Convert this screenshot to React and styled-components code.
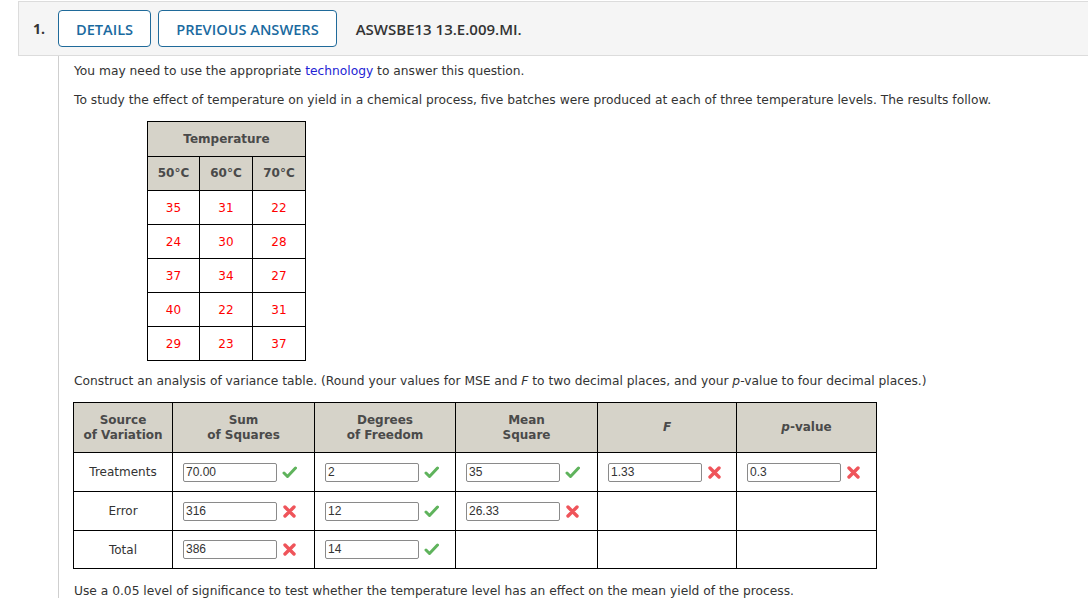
import React from "react";
import styled, { createGlobalStyle } from "styled-components";

const Global = createGlobalStyle`
  html, body { margin: 0; padding: 0; background: #fff; }
  body { font-family: "DejaVu Sans", Verdana, sans-serif; color: #333; }
`;

const Page = styled.div`
  padding: 1px 0 0 18px;
  width: 1100px;
`;

const Header = styled.div`
  display: flex;
  align-items: center;
  height: 53px;
  background: #f5f5f5;
  border: 1px solid #dcdcdc;
  border-right: none;
  padding-left: 14px;
  font-family: "Open Sans", sans-serif;
`;

const Num = styled.span`
  font-weight: 700;
  font-size: 14px;
  color: #333;
  width: 25px;
`;

const TabButton = styled.button`
  height: 37px;
  padding: 0 17px;
  margin-right: 7px;
  background: #fff;
  border: 1px solid #1f6a9a;
  border-radius: 4px;
  color: #1a6aa0;
  font-family: "Open Sans", sans-serif;
  font-size: 14.6px;
  font-weight: 600;
`;

const Code = styled.span`
  margin-left: 12px;
  font-weight: 600;
  font-size: 15px;
  color: #333;
`;

const Body = styled.div`
  margin-left: 40px;
  border-left: 1px solid #cfcfcf;
  padding: 7px 0 0 15px;
  font-size: 12.25px;
  line-height: 16px;
`;

const P = styled.p`
  margin: 0 0 13px 0;
  white-space: nowrap;
`;

const Link = styled.span`
  color: #2323d4;
`;

const Table = styled.table`
  border-collapse: collapse;
  margin: ${p => p.$margin || "0"};
  font-size: 12px;
`;

const Th = styled.th`
  background: #d6d3c9;
  border: 1px solid #000;
  color: #4a4a4a;
  font-weight: 700;
  text-align: center;
  padding: 0;
  height: ${p => p.$h || 33}px;
  width: ${p => (p.$w ? p.$w + "px" : "auto")};
  line-height: 15px;
`;

const Td = styled.td`
  border: 1px solid #000;
  text-align: center;
  padding: 0;
  height: ${p => p.$h || 33}px;
  color: ${p => (p.$red ? "#f00" : "#333")};
`;

const AnsCell = styled.div`
  display: flex;
  align-items: center;
  gap: 5px;
  padding-left: 10px;
`;

const Input = styled.div`
  box-sizing: border-box;
  width: 94px;
  height: 19px;
  border: 1px solid #8a8a8a;
  border-radius: 2px;
  font-family: "Liberation Sans", Arial, sans-serif;
  font-size: 12px;
  line-height: 17px;
  padding-left: 2px;
  color: #333;
  text-align: left;
  background: #fff;
`;

const IconBox = styled.span`
  display: inline-flex;
  width: 15px;
  height: 15px;
  align-items: center;
  justify-content: center;
`;

const Check = () => (
  <IconBox>
    <svg width="15" height="13" viewBox="0 0 15 13">
      <path d="M2 7 L5.5 10.5 L13.5 2" fill="none" stroke="#5fb35c" strokeWidth="3" strokeLinecap="round" strokeLinejoin="round" />
    </svg>
  </IconBox>
);

const Cross = () => (
  <IconBox>
    <svg width="13" height="13" viewBox="0 0 13 13">
      <path d="M2 2 L11 11 M11 2 L2 11" fill="none" stroke="#ef545a" strokeWidth="3.4" strokeLinecap="round" />
    </svg>
  </IconBox>
);

const Answer = ({ value, ok }) => (
  <AnsCell>
    <Input>{value}</Input>
    {ok ? <Check /> : <Cross />}
  </AnsCell>
);

const data = [
  [35, 31, 22],
  [24, 30, 28],
  [37, 34, 27],
  [40, 22, 31],
  [29, 23, 37],
];

export default function App() {
  return (
    <Page>
      <Global />
      <Header>
        <Num>1.</Num>
        <TabButton>DETAILS</TabButton>
        <TabButton>PREVIOUS ANSWERS</TabButton>
        <Code>ASWSBE13 13.E.009.MI.</Code>
      </Header>
      <Body>
        <P>
          You may need to use the appropriate <Link>technology</Link> to answer this question.
        </P>
        <P>
          To study the effect of temperature on yield in a chemical process, five batches were produced at each of three temperature levels. The results follow.
        </P>
        <Table $margin="0 0 12px 73px">
          <thead>
            <tr>
              <Th colSpan={3} $h={34}>Temperature</Th>
            </tr>
            <tr>
              <Th $w={51}>50°C</Th>
              <Th $w={52}>60°C</Th>
              <Th $w={52}>70°C</Th>
            </tr>
          </thead>
          <tbody>
            {data.map((r, i) => (
              <tr key={i}>
                {r.map((v, j) => (
                  <Td key={j} $red>{v}</Td>
                ))}
              </tr>
            ))}
          </tbody>
        </Table>
        <P>
          Construct an analysis of variance table. (Round your values for MSE and <i>F</i> to two decimal places, and your <i>p</i>-value to four decimal places.)
        </P>
        <Table $margin="0 0 14px -1px">
          <thead>
            <tr>
              <Th $w={98} $h={49}>Source<br />of Variation</Th>
              <Th $w={141} $h={49}>Sum<br />of Squares</Th>
              <Th $w={140} $h={49}>Degrees<br />of Freedom</Th>
              <Th $w={141} $h={49}>Mean<br />Square</Th>
              <Th $w={138} $h={49}><i>F</i></Th>
              <Th $w={139} $h={49}><i>p</i>-value</Th>
            </tr>
          </thead>
          <tbody>
            <tr>
              <Td $h={38}>Treatments</Td>
              <Td $h={38}><Answer value="70.00" ok /></Td>
              <Td $h={38}><Answer value="2" ok /></Td>
              <Td $h={38}><Answer value="35" ok /></Td>
              <Td $h={38}><Answer value="1.33" /></Td>
              <Td $h={38}><Answer value="0.3" /></Td>
            </tr>
            <tr>
              <Td $h={38}>Error</Td>
              <Td $h={38}><Answer value="316" /></Td>
              <Td $h={38}><Answer value="12" ok /></Td>
              <Td $h={38}><Answer value="26.33" /></Td>
              <Td $h={38} />
              <Td $h={38} />
            </tr>
            <tr>
              <Td $h={37}>Total</Td>
              <Td $h={37}><Answer value="386" /></Td>
              <Td $h={37}><Answer value="14" ok /></Td>
              <Td $h={37} />
              <Td $h={37} />
              <Td $h={37} />
            </tr>
          </tbody>
        </Table>
        <P>
          Use a 0.05 level of significance to test whether the temperature level has an effect on the mean yield of the process.
        </P>
      </Body>
    </Page>
  );
}
